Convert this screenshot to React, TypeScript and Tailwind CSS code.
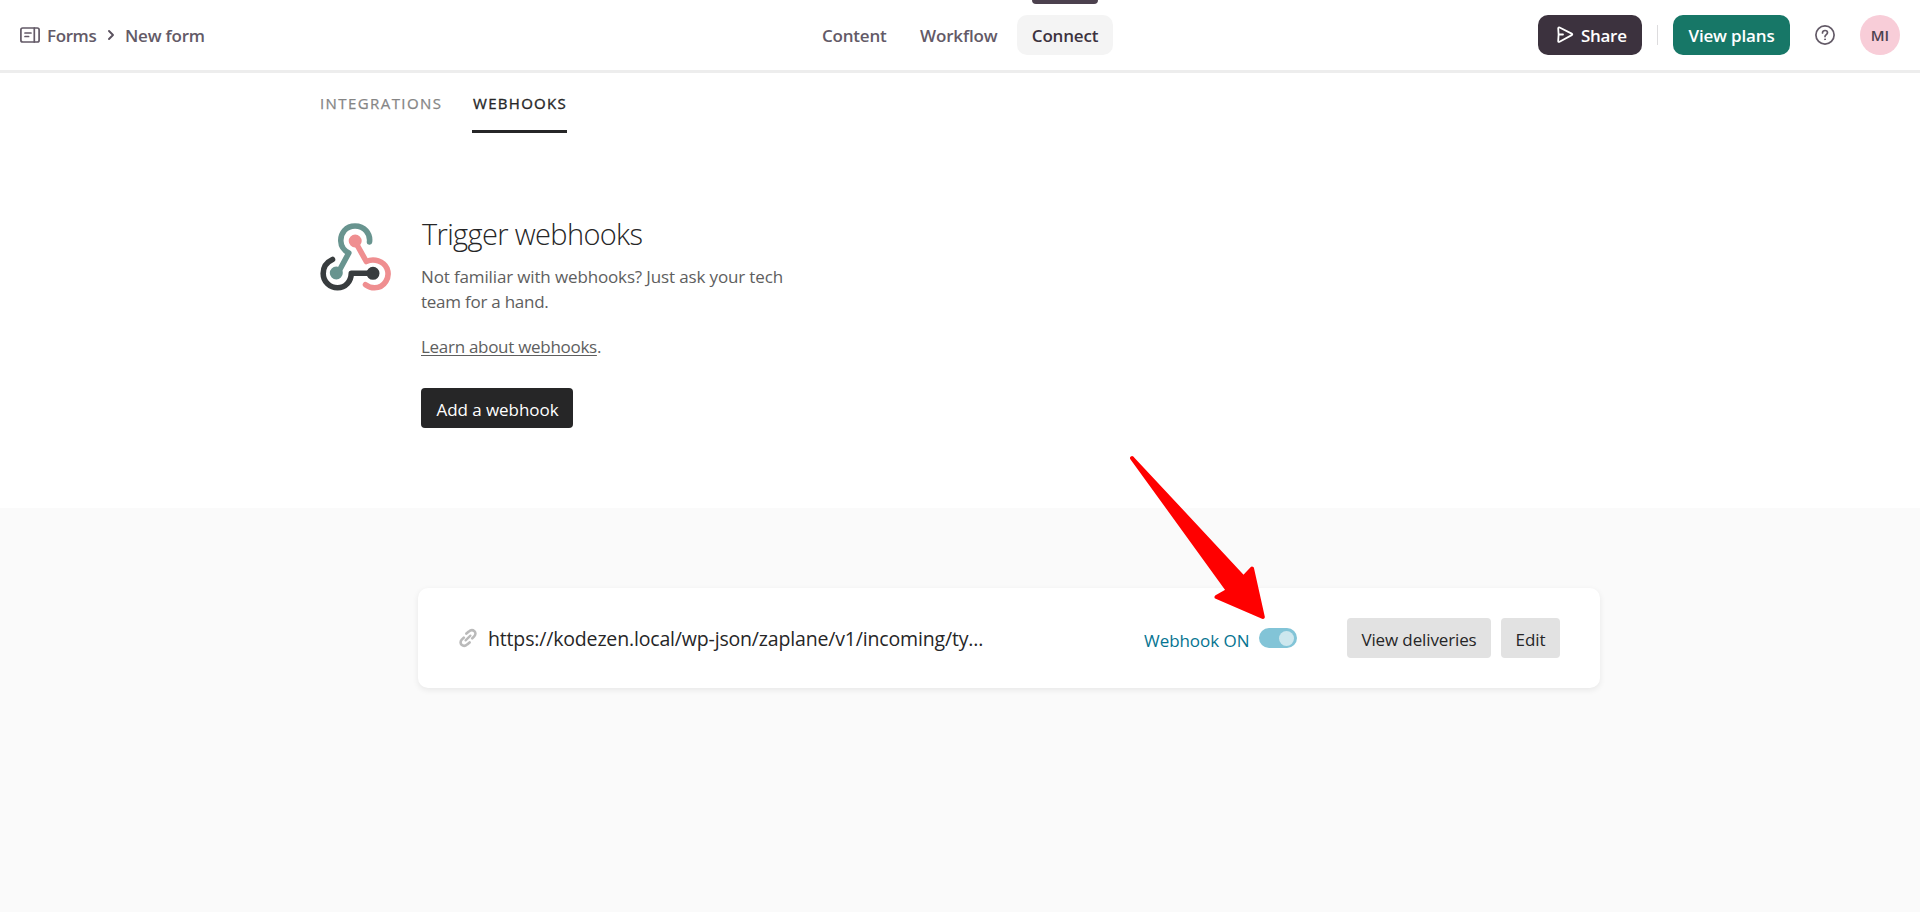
function FormsIcon() {
  return (
    <svg className="h-5 w-5 shrink-0" viewBox="0 0 20 20" fill="none" stroke="#635a67" strokeWidth="1.7" strokeLinecap="round" strokeLinejoin="round">
      <rect x="0.9" y="3" width="18.2" height="14" rx="1.8" />
      <path d="M14.3 3v14M5 8h6M5 11.5h3.6" />
    </svg>
  );
}

function WebhookLogo() {
  return (
    <svg className="h-[70px] w-[72px] shrink-0" viewBox="0 0 72 70" fill="none" strokeWidth="5.6" strokeLinecap="round" strokeLinejoin="round">
      <g stroke="#68948f">
        <path d="M49.5 21C50.6 12.5 44.5 5 35 5C26 5 20.5 12 20.8 20C21 25.5 24 29.5 28.8 32L18 52" />
        <circle cx="16.3" cy="52" r="4" fill="#68948f" strokeWidth="5" />
      </g>
      <g stroke="#ef8e90">
        <path d="M36 22L46.3 40.500C54 37.1 63.5 40 67 47.5C70.5 56.5 64.5 66.8 54.5 66.8C51 66.8 48 65.5 45.5 63.7" />
        <circle cx="35.2" cy="20" r="4" fill="#ef8e90" strokeWidth="5" />
      </g>
      <g stroke="#383c3e">
        <path d="M12.5 38.5C6 41.5 3.2 47 3.2 52.5C3.2 61 10 66.8 17.5 66.8C25.5 66.8 31 60.5 31.3 52.3H52" />
        <circle cx="53" cy="52.3" r="4" fill="#383c3e" strokeWidth="5" />
      </g>
    </svg>
  );
}

function LinkIcon() {
  return (
    <svg className="h-5 w-5 shrink-0" viewBox="0 0 20 20" fill="none" stroke="#bababa" strokeWidth="2.6" strokeLinecap="round" strokeLinejoin="round">
      <path d="M7.6 12.4L12.4 7.6" strokeWidth="2.3" />
      <path d="M8.400 5.600L10.8 3.6C12.5 2 14.900 1.900 16.400 3.200C17.800 4.600 17.700 6.800 16.200 8.300L14.200 10.300" />
      <path d="M11.600 14.400L9.2 16.4C7.5 18 5.100 18.100 3.600 16.800C2.200 15.400 2.300 13.200 3.800 11.700L5.800 9.700" />
    </svg>
  );
}

function Header() {
  return (
    <header className="flex h-[73px] items-start border-b-[3px] border-[#ededed] bg-white font-semibold text-[#635a67]">
      <div className="flex h-[70px] w-[1001px] items-center pl-5">
        <FormsIcon />
        <span className="ml-[7px] w-[50px] pt-px tracking-[-0.4px]">Forms</span>
        <svg className="ml-[10px] h-3 w-[8px]" viewBox="0 0 8 12" fill="none" stroke="#5a515e" strokeWidth="1.9" strokeLinecap="round" strokeLinejoin="round">
          <path d="M2 2l4 4-4 4" />
        </svg>
        <span className="ml-[10px] pt-px tracking-[-0.2px]">New form</span>
        <span className="ml-auto w-[65px] pt-px tracking-[-0.2px]">Content</span>
        <span className="ml-[33px] w-[81px] pt-px tracking-[-0.15px]">Workflow</span>
      </div>
      <div className="ml-4 flex w-24 flex-col items-center">
        <div className="h-1 w-[66px] rounded-b-sm bg-[#4c414e]" />
        <div className="mt-[11px] flex h-10 w-24 items-center justify-center rounded-[10px] bg-[#f4f4f4] pt-px tracking-[-0.2px] text-[#3c323e]">Connect</div>
      </div>
      <div className="ml-auto flex h-[70px] items-center pr-5">
        <button className="flex h-10 w-[104px] items-center rounded-[10px] bg-[#3c323e] pl-[18px] tracking-[-0.3px] text-white">
          <svg className="h-[18px] w-[18px]" viewBox="0 0 18 18" fill="none" stroke="#fff" strokeWidth="1.8" strokeLinejoin="round" strokeLinecap="round">
            <path d="M2.2 2.3C2.2 1.5 2.9 1.2 3.6 1.5L15.7 7.6C16.5 8 16.5 8.7 15.7 9.1L3.6 15.8C2.8 16.2 2.1 15.8 2.2 15L2.6 8.5ZM2.6 8.5H7" />
          </svg>
          <span className="ml-[7px] pt-px">Share</span>
        </button>
        <div className="ml-[15px] h-5 w-px bg-[#dddcde]" />
        <button className="ml-[15px] flex h-10 w-[117px] items-center justify-center rounded-[10px] bg-[#177767] pt-px tracking-[-0.16px] text-white">View plans</button>
        <svg className="ml-[25px] h-5 w-5" viewBox="0 0 20 20" fill="none" stroke="#635a67" strokeWidth="1.7" strokeLinecap="round">
          <circle cx="10" cy="10" r="9.1" />
          <path d="M7.5 7.9C7.5 6.4 8.6 5.5 10 5.5S12.5 6.4 12.5 7.8C12.5 9.6 10 9.7 10 11.6" />
          <circle cx="10" cy="14.3" r="0.5" fill="#635a67" strokeWidth="1" />
        </svg>
        <div className="ml-[25px] flex h-10 w-10 items-center justify-center rounded-full bg-[#f8cdd8] text-[15px] text-[#4c414e]">MI</div>
      </div>
    </header>
  );
}

function Tabs() {
  return (
    <nav className="flex h-[60px] items-stretch pl-[320px] text-[15px] tracking-[1.42px]">
      <div className="w-[152px] pt-[19px] leading-[22px] text-[#858585] [-webkit-text-stroke:0.25px_#858585]">INTEGRATIONS</div>
      <div className="w-[95px] border-b-[3px] border-[#262627] pt-[19px] pl-px leading-[22px] tracking-[1.3px] whitespace-nowrap text-[#262627] [-webkit-text-stroke:0.35px_#262627]">WEBHOOKS</div>
    </nav>
  );
}

function Intro() {
  return (
    <section className="flex h-[375px] items-start pl-[320px]">
      <div className="pt-[88px]">
        <WebhookLogo />
      </div>
      <div className="ml-[29px] pt-[81px] text-[#5e5e5e]">
        <h1 className="pl-px text-[29px] leading-10 font-light tracking-[-0.65px] text-[#262627]">Trigger webhooks</h1>
        <p className="mt-[10px] leading-[25px] tracking-[-0.14px]">
          Not familiar with webhooks? Just ask your tech
          <br />
          <span className="tracking-[-0.25px]">team for a hand.</span>
        </p>
        <p className="mt-5 leading-[25px] tracking-[-0.29px]">
          <a className="underline decoration-1 underline-offset-2">Learn about webhooks</a>.
        </p>
        <button className="mt-[29px] flex h-10 w-[152px] items-center justify-center rounded-[4px] bg-[#262627] pt-[3px] pl-px tracking-[-0.05px] text-white">Add a webhook</button>
      </div>
    </section>
  );
}

function WebhookRow() {
  return (
    <div className="mt-20 ml-[418px] flex h-[100px] w-[1182px] items-center rounded-[10px] bg-white pl-10 text-[#262627] shadow-[0_2px_6px_rgba(0,0,0,0.08)]">
      <LinkIcon />
      <span className="ml-[10px] w-[656px] pt-[2px] text-[19.5px] tracking-[-0.165px]">https://kodezen.local/wp-json/zaplane/v1/incoming/ty...</span>
      <span className="w-[115px] pt-[5px] tracking-[-0.05px] text-[#067491]">Webhook ON</span>
      <div className="flex h-5 w-[38px] items-center justify-end rounded-full bg-[#82c4d7] pr-[3px]">
        <div className="h-[15px] w-[15px] rounded-full bg-[#cde7ee]" />
      </div>
      <button className="ml-[50px] flex h-10 w-36 items-center justify-center rounded-[4px] bg-[#e2e2e2] pt-[3px] tracking-[-0.13px]">View deliveries</button>
      <button className="ml-[10px] flex h-10 w-[59px] items-center justify-center rounded-[4px] bg-[#e2e2e2] pt-[3px] tracking-[-0.1px]">Edit</button>
    </div>
  );
}

export default function App() {
  return (
    <div className="relative flex h-[912px] w-[1920px] flex-col overflow-hidden bg-white font-['Open_Sans','Noto_Sans',sans-serif] text-[17px]">
      <Header />
      <Tabs />
      <Intro />
      <main className="flex-1 bg-[#fafafa]">
        <WebhookRow />
      </main>
      <svg className="pointer-events-none absolute top-[450px] left-[1120px] h-[180px] w-[160px]" viewBox="0 0 160 180" fill="#f00" stroke="#f00" strokeWidth="4" strokeLinejoin="round">
        <path d="M12 8L123.5 127.5L132 118.5L142.8 167L96.5 147L108 140.5Z" />
      </svg>
    </div>
  );
}
